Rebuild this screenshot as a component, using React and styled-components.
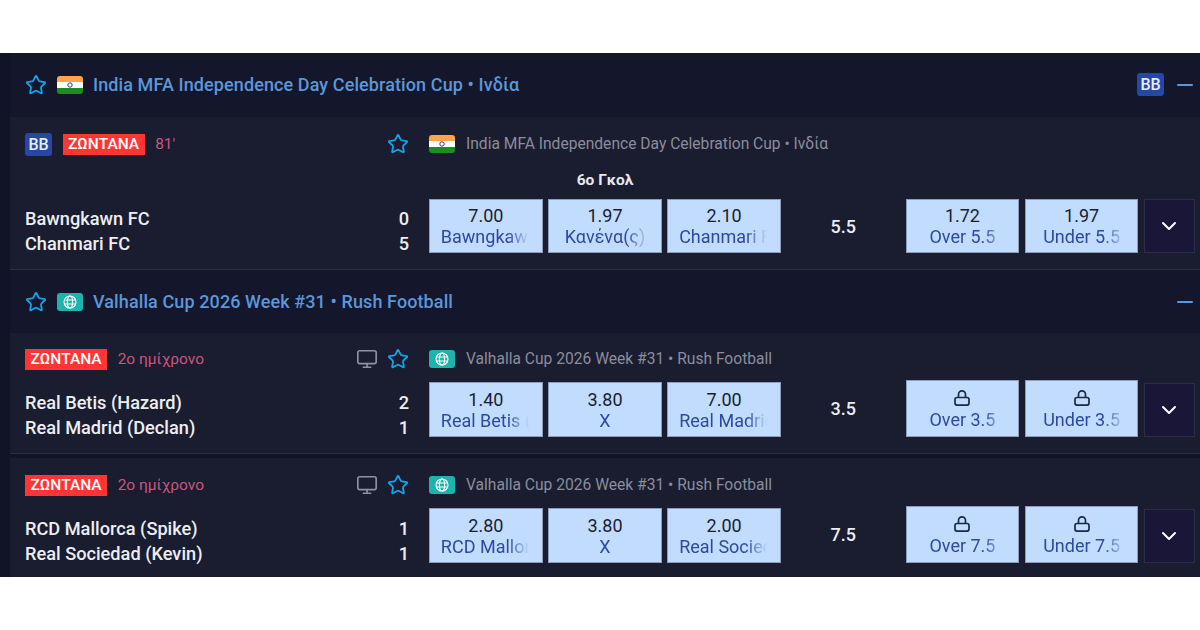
import React from "react";
import styled, { createGlobalStyle } from "styled-components";
import { ChevronDown, Minus, Monitor, Star } from "lucide-react";

const GlobalStyle = createGlobalStyle`
  html, body {
    margin: 0;
    background: #fff;
    font-family: Roboto, "Noto Sans", sans-serif;
  }
`;

const matches = [
  {
    badge: true,
    status: "81'",
    league: "India MFA Independence Day Celebration Cup • Ινδία",
    flag: "india",
    market: "6ο Γκολ",
    home: "Bawngkawn FC",
    away: "Chanmari FC",
    scores: [0, 5],
    odds: [
      ["7.00", "Bawngkawn FC"],
      ["1.97", "Κανένα(ς)"],
      ["2.10", "Chanmari FC"],
    ],
    line: "5.5",
    totals: [
      ["1.72", "Over 5.5"],
      ["1.97", "Under 5.5"],
    ],
    top: 16,
    bottom: 13,
    teamsTop: 7,
    oddHeight: 54,
  },
  {
    status: "2ο ημίχρονο",
    tv: true,
    league: "Valhalla Cup 2026 Week #31 • Rush Football",
    flag: "globe",
    home: "Real Betis (Hazard)",
    away: "Real Madrid (Declan)",
    scores: [2, 1],
    odds: [
      ["1.40", "Real Betis (Hazard)"],
      ["3.80", "X"],
      ["7.00", "Real Madrid (Declan)"],
    ],
    line: "3.5",
    totals: [
      [null, "Over 3.5"],
      [null, "Under 3.5"],
    ],
    top: 15,
    bottom: 13,
    teamsTop: 8,
    oddHeight: 55,
  },
  {
    status: "2ο ημίχρονο",
    tv: true,
    league: "Valhalla Cup 2026 Week #31 • Rush Football",
    flag: "globe",
    home: "RCD Mallorca (Spike)",
    away: "Real Sociedad (Kevin)",
    scores: [1, 1],
    odds: [
      ["2.80", "RCD Mallorca (Spike)"],
      ["3.80", "X"],
      ["2.00", "Real Sociedad (Kevin)"],
    ],
    line: "7.5",
    totals: [
      [null, "Over 7.5"],
      [null, "Under 7.5"],
    ],
    top: 16,
    bottom: 12,
    teamsTop: 8,
    oddHeight: 55,
  },
];

function IndiaFlag() {
  return (
    <FlagBox>
      <svg width="26" height="18" viewBox="0 0 26 18">
        <rect width="26" height="6" fill="#ffa44a" />
        <rect y="6" width="26" height="6" fill="#fff" />
        <rect y="12" width="26" height="6" fill="#1a8f1e" />
        <circle cx="13" cy="9" r="2.2" fill="none" stroke="#2a3c8f" strokeWidth="1" />
      </svg>
    </FlagBox>
  );
}

function GlobeFlag() {
  return (
    <FlagBox $teal>
      <svg width="14" height="14" viewBox="0 0 14 14" fill="none" stroke="#fff" strokeWidth="1.1">
        <circle cx="7" cy="7" r="6" />
        <ellipse cx="7" cy="7" rx="2.6" ry="6" />
        <path d="M1 5h12M1 9h12" />
      </svg>
    </FlagBox>
  );
}

function LeagueFlag({ type }) {
  return type === "india" ? <IndiaFlag /> : <GlobeFlag />;
}

function LockIcon() {
  return (
    <LockSvg width="16" height="16" viewBox="0 0 16 16" fill="none" stroke="#1a2a44" strokeWidth="1.7">
      <rect x="1" y="7.5" width="14" height="7.6" rx="2" />
      <path d="M4.5 7.5V4.4a3.5 3.5 0 0 1 7 0v3.1" />
    </LockSvg>
  );
}

function OddButton({ value, label, locked }) {
  return (
    <Odd $locked={locked}>
      {locked ? <LockIcon /> : <OddValue>{value}</OddValue>}
      <OddLabel>
        <span>{label}</span>
      </OddLabel>
    </Odd>
  );
}

function MatchRow({ match, last }) {
  const locked = match.totals[0][0] === null;
  return (
    <Row $last={last} $top={match.top} $bottom={match.bottom}>
      <MetaLine>
        <MetaLeft>
          {match.badge && <BB>BB</BB>}
          <Live>ΖΩΝΤΑΝΑ</Live>
          <Status>{match.status}</Status>
          <MetaIcons>
            {match.tv && <Monitor size={22} color="#8f92a1" strokeWidth={1.8} />}
            <Star size={22} color="#12a5e6" strokeWidth={2} />
          </MetaIcons>
        </MetaLeft>
        <LeagueFlag type={match.flag} />
        <SubLeague>{match.league}</SubLeague>
      </MetaLine>
      {match.market ? <Market>{match.market}</Market> : <MarketGap />}
      <Body>
        <Teams $top={match.teamsTop}>
          <Team>
            <span>{match.home}</span>
            <span>{match.scores[0]}</span>
          </Team>
          <Team>
            <span>{match.away}</span>
            <span>{match.scores[1]}</span>
          </Team>
        </Teams>
        <OddsGrid $height={match.oddHeight}>
          {match.odds.map(([value, label]) => (
            <OddButton key={label} value={value} label={label} />
          ))}
          <Line $locked={locked}>{match.line}</Line>
          {match.totals.map(([value, label]) => (
            <OddButton key={label} value={value} label={label} locked={locked} />
          ))}
          <More $locked={locked}>
            <ChevronDown size={24} color="#fff" strokeWidth={2} />
          </More>
        </OddsGrid>
      </Body>
    </Row>
  );
}

export default function App() {
  return (
    <>
      <GlobalStyle />
      <Page>
        <Board>
          <SectionHead $tall>
            <Star size={22} color="#12a5e6" strokeWidth={2} />
            <LeagueFlag type="india" />
            <SectionTitle>India MFA Independence Day Celebration Cup • Ινδία</SectionTitle>
            <HeadRight>
              <BB>BB</BB>
              <Minus size={24} color="#5b97d9" strokeWidth={2} />
            </HeadRight>
          </SectionHead>
          <MatchRow match={matches[0]} />
          <SectionHead>
            <Star size={22} color="#12a5e6" strokeWidth={2} />
            <LeagueFlag type="globe" />
            <SectionTitle>Valhalla Cup 2026 Week #31 • Rush Football</SectionTitle>
            <HeadRight>
              <Minus size={24} color="#5b97d9" strokeWidth={2} />
            </HeadRight>
          </SectionHead>
          <MatchRow match={matches[1]} />
          <MatchRow match={matches[2]} last />
        </Board>
      </Page>
    </>
  );
}

const Page = styled.div`
  width: 1200px;
  height: 630px;
  padding-top: 53px;
  box-sizing: border-box;
  overflow: hidden;
`;

const Board = styled.div`
  height: 524px;
  overflow: hidden;
  background: #111326;
  padding-left: 10px;
`;

const SectionHead = styled.div`
  box-sizing: border-box;
  height: ${(p) => (p.$tall ? "64px" : "63px")};
  background: #14162b;
  display: flex;
  align-items: center;
  gap: 10px;
  padding: 0 3px ${(p) => (p.$tall ? "1px" : "0")} 15px;
`;

const SectionTitle = styled.div`
  font-size: 18px;
  font-weight: 500;
  letter-spacing: 0.1px;
  color: #5b97d9;
`;

const HeadRight = styled.div`
  margin-left: auto;
  display: flex;
  align-items: center;
  gap: 9px;
`;

const FlagBox = styled.div`
  width: 26px;
  height: 18px;
  border-radius: 3px;
  overflow: hidden;
  flex: none;
  display: flex;
  align-items: center;
  justify-content: center;
  background: ${(p) => (p.$teal ? "#1fb3ad" : "transparent")};
`;

const BB = styled.div`
  width: 27px;
  height: 23px;
  border-radius: 3px;
  background: #2447a8;
  color: #e8eefc;
  font-size: 16px;
  font-weight: 500;
  display: flex;
  align-items: center;
  justify-content: center;
`;

const Row = styled.div`
  background: #1a1c30;
  padding: ${(p) => p.$top}px 5px ${(p) => p.$bottom}px 15px;
  border-bottom: ${(p) => (p.$last ? "none" : "1px solid #2c2e45")};
  & + & {
    margin-top: 4px;
  }
`;

const MetaLine = styled.div`
  display: flex;
  align-items: center;
  height: 22px;
`;

const MetaLeft = styled.div`
  width: 404px;
  flex: none;
  display: flex;
  align-items: center;
  gap: 10.5px;
`;

const MetaIcons = styled.div`
  margin-left: auto;
  margin-right: 20px;
  display: flex;
  align-items: center;
  gap: 9px;
`;

const Live = styled.div`
  height: 21px;
  padding: 0 5.5px;
  background: #ff3535;
  color: #fff;
  font-size: 15.5px;
  font-weight: 500;
  line-height: 21px;
`;

const Status = styled.div`
  font-size: 15.5px;
  color: #c9567f;
`;

const SubLeague = styled.div`
  margin-left: 11px;
  font-size: 15.6px;
  color: #8b8d9c;
`;

const Market = styled.div`
  margin: 15px 0 9px 404px;
  width: 352px;
  height: 20px;
  line-height: 20px;
  text-align: center;
  font-size: 15.5px;
  font-weight: 700;
  color: #e8e8ee;
`;

const MarketGap = styled.div`
  height: 12px;
`;

const Body = styled.div`
  display: flex;
  align-items: flex-start;
`;

const Teams = styled.div`
  width: 384px;
  margin-right: 20px;
  padding-top: ${(p) => p.$top}px;
  flex: none;
`;

const Team = styled.div`
  display: flex;
  justify-content: space-between;
  font-size: 18.2px;
  font-weight: 500;
  line-height: 25px;
  color: #eceef2;
`;

const OddsGrid = styled.div`
  display: grid;
  grid-template-columns: repeat(6, 113.67px) 51px;
  grid-auto-rows: ${(p) => p.$height}px;
  column-gap: 5.5px;
`;

const Odd = styled.div`
  box-sizing: border-box;
  background: #c2dcff;
  border: 1px solid #8f9cba;
  display: flex;
  flex-direction: column;
  align-items: center;
  justify-content: center;
  ${(p) => p.$locked && "margin-top: -2px; padding-top: 2px;"}
`;

const OddValue = styled.div`
  font-size: 18px;
  line-height: 21px;
  color: #1a1c30;
`;

const OddLabel = styled.div`
  width: 90px;
  overflow: hidden;
  white-space: nowrap;
  font-size: 18px;
  line-height: 21px;
  color: #2d4aa3;
  display: flex;
  justify-content: safe center;
  mask-image: linear-gradient(to right, #000 74%, transparent 98%);
`;

const LockSvg = styled.svg`
  margin-bottom: 3px;
`;

const Line = styled.div`
  display: flex;
  align-items: center;
  justify-content: center;
  font-size: 18px;
  font-weight: 500;
  color: #eceef2;
  ${(p) => p.$locked && "padding-bottom: 2px;"}
`;

const More = styled.div`
  box-sizing: border-box;
  background: #1a1638;
  border: 1px solid #2b2c4a;
  display: flex;
  align-items: center;
  justify-content: center;
  ${(p) => p.$locked && "margin-top: 1px;"}
`;
